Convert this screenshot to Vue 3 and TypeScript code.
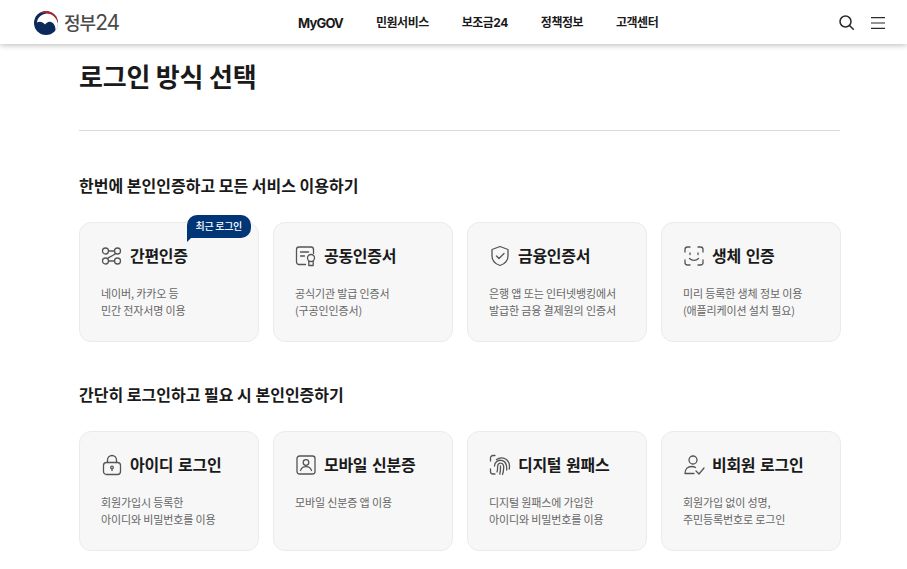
<script setup lang="ts">
interface Card { icon: string; title: string; lines: string[]; badge?: string }
interface Section { heading: string; cards: Card[] }
const nav: string[] = ['MyGOV', '민원서비스', '보조금24', '정책정보', '고객센터']
const sections: Section[] = [
  { heading: '한번에 본인인증하고 모든 서비스 이용하기', cards: [
    { icon: 'simple', title: '간편인증', lines: ['네이버, 카카오 등', '민간 전자서명 이용'], badge: '최근 로그인' },
    { icon: 'cert', title: '공동인증서', lines: ['공식기관 발급 인증서', '(구공인인증서)'] },
    { icon: 'shield', title: '금융인증서', lines: ['은행 앱 또는 인터넷뱅킹에서', '발급한 금융 결제원의 인증서'] },
    { icon: 'face', title: '생체 인증', lines: ['미리 등록한 생체 정보 이용', '(애플리케이션 설치 필요)'] },
  ] },
  { heading: '간단히 로그인하고 필요 시 본인인증하기', cards: [
    { icon: 'lock', title: '아이디 로그인', lines: ['회원가입시 등록한', '아이디와 비밀번호를 이용'] },
    { icon: 'mobile', title: '모바일 신분증', lines: ['모바일 신분증 앱 이용'] },
    { icon: 'finger', title: '디지털 원패스', lines: ['디지털 원패스에 가입한', '아이디와 비밀번호를 이용'] },
    { icon: 'guest', title: '비회원 로그인', lines: ['회원가입 없이 성명,', '주민등록번호로 로그인'] },
  ] },
]
</script>

<template>
  <div class="page">
    <header class="header">
      <div class="logo">
        <svg width="26" height="26" viewBox="0 0 26 26">
          <circle cx="13" cy="13" r="12" fill="#0b2a5b" />
          <path d="M4 12.500C4.500 7 9.500 3.500 14 3.500 20 3.500 24.500 8 25 14 24.800 16 24 18.500 22.500 20 22.500 16 21 13 18 12 15 11.200 13.500 13 12 14.500 9.500 11.500 6.500 11 4 12.500z" fill="#fff" />
          <path d="M25 13c0-1.200-.2-2.400-.6-3.500C23.200 5.600 19.500 2 13.500 1c-2.700 0-5.100.9-7 2.500 2.500-.8 5-1 7.500-.5 5.500 1 9.500 5 11 10z" fill="#c8202f" />
          <path d="M22.500 20c1.500-1.500 2.300-4 2.500-6 .1 3-.9 5.500-2.500 7.500z" fill="#fff" />
        </svg>
        <span class="logo-text">정부<span class="logo-num">24</span></span>
      </div>
      <nav class="nav">
        <a v-for="item in nav" :key="item" class="nav-item" :class="{ latin: item === 'MyGOV' }">{{ item }}</a>
      </nav>
      <div class="tools">
        <svg width="15" height="15" viewBox="0 0 15 15" fill="none" stroke="#2b2b2b" stroke-width="1.500">
          <circle cx="6.500" cy="6.500" r="5.500" />
          <path d="M10.500 10.500 14.300 14.300" stroke-linecap="round" />
        </svg>
        <svg width="14" height="12" viewBox="0 0 14 12" fill="none" stroke="#2b2b2b" stroke-width="1.200">
          <path d="M0 .7h14M0 6h14M0 11.300h14" />
        </svg>
      </div>
    </header>

    <main class="main">
      <h1 class="title">로그인 방식 선택</h1>
      <section v-for="(section, i) in sections" :key="section.heading" class="section" :class="{ first: i === 0 }">
        <h2 class="heading">{{ section.heading }}</h2>
        <div class="grid">
          <article v-for="card in section.cards" :key="card.title" class="card">
            <span v-if="card.badge" class="badge">{{ card.badge }}</span>
            <div class="card-head">
              <svg class="icon" width="22" height="22" viewBox="0 0 22 22" fill="none" stroke="#555" stroke-width="1.300" stroke-linecap="round" stroke-linejoin="round">
                <template v-if="card.icon === 'simple'">
                  <circle cx="4.500" cy="6" r="3" /><circle cx="16.500" cy="6" r="3" />
                  <circle cx="4.500" cy="16" r="3" /><circle cx="16.500" cy="16" r="3" />
                  <path d="M7.500 6h6M7.500 16h6M14.500 8.500C12.500 11 9 11 6.500 13.500" />
                </template>
                <template v-else-if="card.icon === 'cert'">
                  <path d="M10.500 19.500H4a2.500 2.500 0 0 1-2.500-2.500V4.500A2.500 2.500 0 0 1 4 2h12a2.500 2.500 0 0 1 2.500 2.500v4" />
                  <path d="M5.500 7h8M5.500 11h4" />
                  <circle cx="16" cy="13" r="3.500" />
                  <path d="M13.800 16v4.500h4.400V16" />
                </template>
                <template v-else-if="card.icon === 'shield'">
                  <path d="M11 1.500 19 4.500v6.500c0 4.500-3.500 8-8 9.500-4.500-1.500-8-5-8-9.500V4.500z" />
                  <path d="m7.500 11 2.500 2.500 5-5" />
                </template>
                <template v-else-if="card.icon === 'face'">
                  <path d="M2 7V4.500A2.500 2.500 0 0 1 4.500 2H7M15 2h2.500A2.500 2.500 0 0 1 20 4.500V7M20 15v2.500a2.500 2.500 0 0 1-2.500 2.500H15M7 20H4.500A2.500 2.500 0 0 1 2 17.500V15" />
                  <path d="M7 8v1.500M15 8v1.500M6.500 13.500c2.500 2.500 6.500 2.500 9 0" />
                </template>
                <template v-else-if="card.icon === 'lock'">
                  <rect x="2.500" y="8.500" width="17" height="12" rx="3" />
                  <path d="M6.500 8.500V6a4.500 4.500 0 0 1 9 0v2.500" />
                  <circle cx="11" cy="13.500" r="1.300" /><path d="M11 14.800v1.700" />
                </template>
                <template v-else-if="card.icon === 'mobile'">
                  <rect x="2" y="2" width="18" height="18" rx="2.500" />
                  <circle cx="11" cy="8.500" r="2.800" />
                  <path d="M5.500 16.500c.8-2.500 2.800-3.800 5.500-3.800s4.700 1.300 5.500 3.800" />
                </template>
                <template v-else-if="card.icon === 'finger'">
                  <path d="M1.500 7V4A2.500 2.500 0 0 1 4 1.500H6M1.500 15v2.500A2.500 2.500 0 0 0 4 20H6" />
                  <path d="M7.500 5.500c4-3 10-2 12.500 3.500.6 2 .6 4 .2 6M5.500 12c0-4 4-6.500 7.500-5.500 4 1 5 4.500 4.700 9.500M8 18c.8-2 .6-5 .6-6 .3-2.500 2.200-3 3.200-2.800 2 .3 3 2 2.900 4.300-.1 2.500-.4 5-1.200 7M10.800 20c.6-2.500.8-5 .7-8" />
                </template>
                <template v-else>
                  <circle cx="10" cy="6" r="4" />
                  <path d="M2 19.500c0-4.500 3-7 6.500-7 1.500 0 3 .3 4 1M2 19.500h9M13 17l3 3 5-6" />
                </template>
              </svg>
              <h3 class="card-title">{{ card.title }}</h3>
            </div>
            <p class="card-desc"><span v-for="line in card.lines" :key="line" class="line">{{ line }}</span></p>
          </article>
        </div>
      </section>
    </main>
  </div>
</template>

<style scoped>
.page {
  width: 907px;
  height: 569px;
  overflow: hidden;
  background: #fff;
  font-family: "Noto Sans CJK KR", "Noto Sans", sans-serif;
  color: #1a1a1a;
}
.header {
  height: 44px;
  display: flex;
  align-items: center;
  position: relative;
  background: #fff;
  box-shadow: 0 1px 6px rgba(0, 0, 0, 0.28);
}
.logo {
  position: absolute;
  left: 33px;
  top: 9px;
  display: flex;
  align-items: center;
  gap: 5px;
}
.logo-text {
  font-size: 18px;
  font-weight: 500;
  letter-spacing: -1px;
  color: #4a4a4a;
  line-height: 26px;
}
.logo-num {
  font-family: Inter, sans-serif;
  font-size: 21px;
  font-weight: 400;
}
.nav {
  margin-left: 298px;
  display: flex;
  gap: 33px;
}
.nav-item {
  font-family: Inter, "Noto Sans CJK KR", sans-serif;
  font-size: 12px;
  font-weight: 700;
  letter-spacing: -0.5px;
  color: #1a1a1a;
  line-height: 20px;
  padding-top: 1px;
}
.nav-item.latin {
  font-size: 13px;
  letter-spacing: -0.8px;
}
.tools {
  position: absolute;
  left: 839px;
  top: 15px;
  display: flex;
  align-items: center;
  gap: 17px;
}
.main {
  width: 762px;
  margin-left: 79px;
}
.title {
  margin: 0;
  height: 87px;
  padding-top: 11px;
  box-sizing: border-box;
  border-bottom: 1px solid #d9d9d9;
  font-size: 26px;
  font-weight: 700;
  line-height: 42px;
  letter-spacing: -0.2px;
  width: 761px;
}
.section {
  padding-top: 40px;
}
.section.first {
  padding-top: 42px;
}
.heading {
  margin: 0 0 25px;
  font-size: 16px;
  font-weight: 700;
  line-height: 24px;
}
.grid {
  display: grid;
  grid-template-columns: repeat(4, 180px);
  gap: 14px;
}
.card {
  position: relative;
  height: 120px;
  box-sizing: border-box;
  padding: 21px 20px 0 21px;
  background: #f7f7f7;
  border: 1px solid #ebebeb;
  border-radius: 12px;
}
.badge {
  position: absolute;
  right: 7px;
  top: -8px;
  height: 23px;
  padding: 0 9px;
  background: #003675;
  color: #fff;
  font-size: 10px;
  font-weight: 500;
  letter-spacing: -0.3px;
  line-height: 22px;
  border-radius: 10px 10px 10px 0;
}
.badge::after {
  content: "";
  position: absolute;
  left: 0;
  top: 22px;
  border-top: 5px solid #003675;
  border-right: 5px solid transparent;
}
.card-head {
  display: flex;
  align-items: center;
  gap: 7px;
  height: 24px;
}
.icon {
  flex: none;
}
.card-title {
  margin: 0;
  padding-bottom: 2px;
  font-size: 16px;
  font-weight: 700;
  line-height: 24px;
  letter-spacing: -0.3px;
  word-spacing: 1.500px;
  color: #1a1a1a;
}
.card-desc {
  margin: 17px 0 0;
  font-size: 11px;
  line-height: 17px;
  letter-spacing: -0.13px;
  color: #666;
}
.line {
  display: block;
}
</style>
